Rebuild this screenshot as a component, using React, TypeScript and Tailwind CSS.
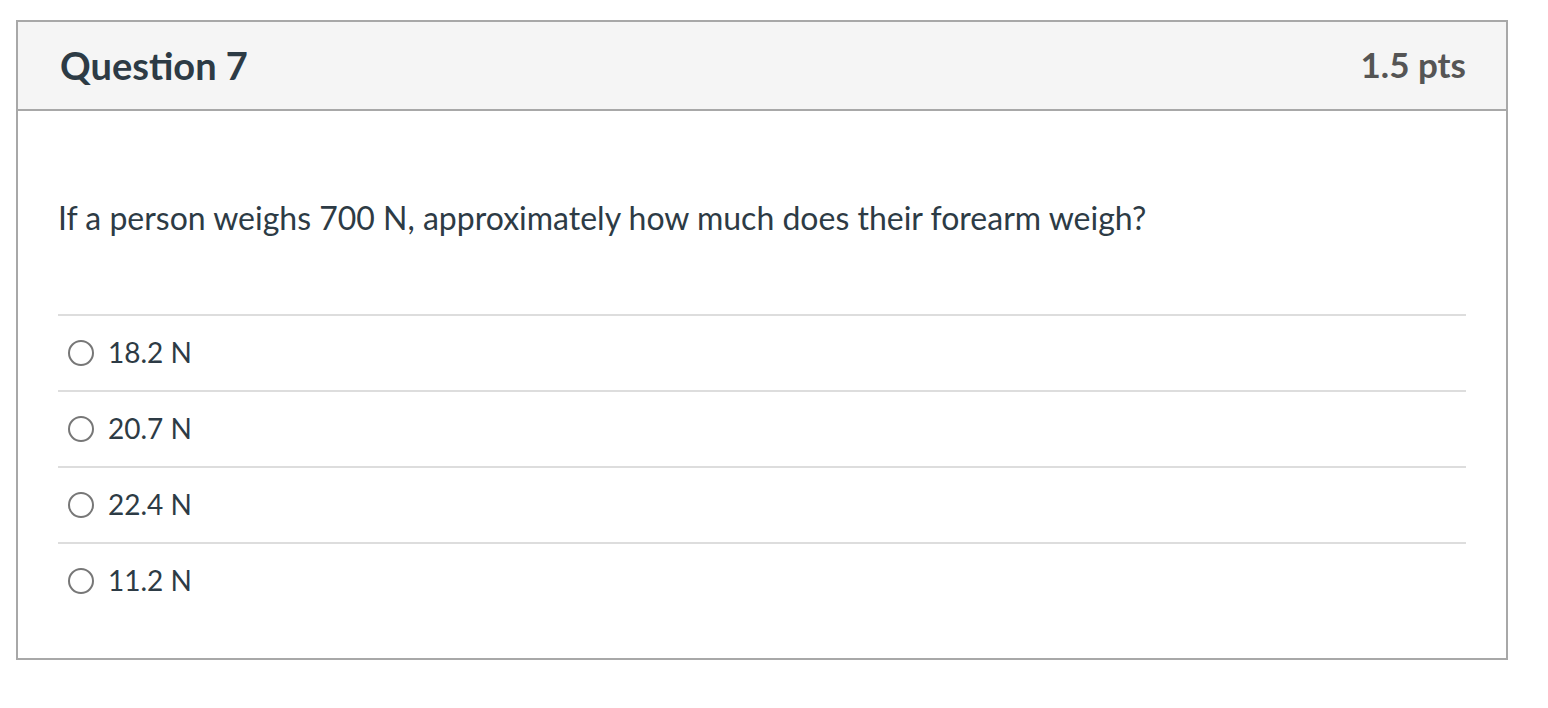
import React from "react";

const options = ["18.2 N", "20.7 N", "22.4 N", "11.2 N"];

export default function App() {
  return (
    <div className="w-[1548px] h-[708px] bg-white pt-[20px] pl-[16px]" style={{ fontFamily: "Lato, 'Noto Sans', sans-serif" }}>
      <div className="w-[1492px] h-[640px] border-2 border-[#a8a8a8] flex flex-col">
        <div className="h-[89px] shrink-0 bg-[#f5f5f5] border-b-2 border-[#a8a8a8] flex items-center justify-between pl-[42px] pr-[40px]">
          <div className="text-[38px] font-bold text-[#2d3b45] leading-none pb-[2px]">Question 7</div>
          <div className="text-[35px] font-bold text-[#555555] leading-none pb-[2px]">1.5 pts</div>
        </div>
        <div className="flex-1 px-[40px]">
          <div className="pt-[87px] h-[203px] text-[32px] text-[#2d3b45] leading-[40px]">
            If a person weighs 700 N, approximately how much does their forearm weigh?
          </div>
          <div className="flex flex-col">
            {options.map((o) => (
              <div key={o} className="h-[76px] border-t-2 border-[#dddddd] flex items-center pb-[3px]">
                <span className="ml-[10px] mt-[2px] w-[26px] h-[26px] rounded-full border-2 border-[#777777] bg-white shrink-0" />
                <span className="ml-[14px] text-[28px] text-[#2d3b45] leading-none">{o}</span>
              </div>
            ))}
          </div>
        </div>
      </div>
    </div>
  );
}
